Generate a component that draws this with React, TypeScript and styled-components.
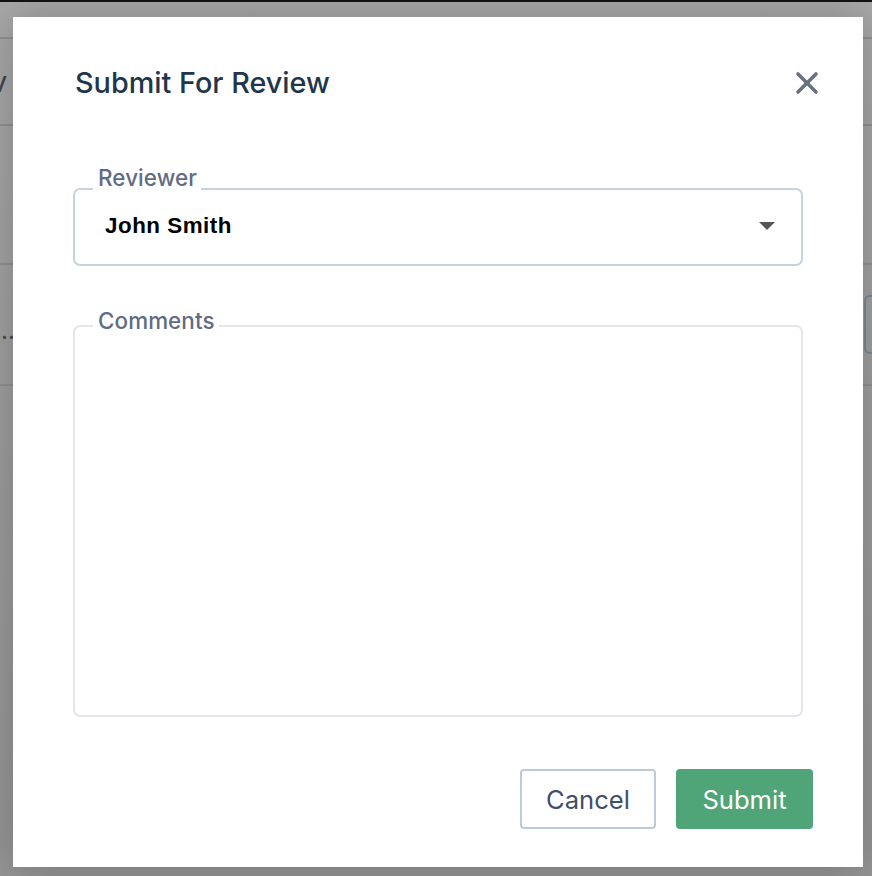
import React from "react";
import styled, { createGlobalStyle } from "styled-components";
import { X } from "lucide-react";

const Global = createGlobalStyle`
  html, body { margin: 0; padding: 0; height: 100%; overflow: hidden; background: #a3a3a3; }
  #root { height: 100%; }
  * { box-sizing: border-box; }
`;

const Page = styled.div`
  position: relative;
  width: 872px;
  height: 876px;
  overflow: hidden;
  background: linear-gradient(180deg, #a8a8a8 0%, #9c9c9c 50%, #949494 100%);
  border-top: 2px solid #111;
  font-family: Inter, "Liberation Sans", sans-serif;
`;

const BackRow = styled.div<{ $h: number }>`
  height: ${(p) => p.$h}px;
  border-bottom: 2px solid #8f8f8f;
  display: flex;
  align-items: center;
  justify-content: space-between;
  color: #4a4a4a;
  font-size: 24px;
  line-height: 1;
`;

const Clipped = styled.span`
  margin-left: -9px;
  font-size: 29px;
  color: #3d4654;
`;

const Dots = styled.span`
  margin: 12px 0 0 1px;
  font-size: 24px;
`;

const BackButton = styled.div`
  width: 30px;
  height: 59px;
  margin-right: -22px;
  border: 2px solid #7c8894;
  border-radius: 6px;
`;

const Modal = styled.div`
  position: absolute;
  left: 13px;
  top: 15px;
  width: 850px;
  height: 850px;
  background: #fff;
  box-shadow: 0 0 40px rgba(0, 0, 0, 0.22);
  padding: 45px 50px 38px 60px;
  display: flex;
  flex-direction: column;
`;

const Header = styled.div`
  display: flex;
  align-items: center;
  justify-content: space-between;
  height: 42px;
  padding-left: 2px;
`;

const Title = styled.h2`
  margin: 0;
  font-size: 28.8px;
  font-weight: 500;
  color: #1f364d;
  line-height: 42px;
`;

const Close = styled.button`
  border: 0;
  padding: 0;
  background: none;
  color: #68717d;
  width: 36px;
  height: 36px;
  display: flex;
  align-items: center;
  justify-content: center;
  margin-right: -12px;
`;

const Field = styled.fieldset<{ $tone: string; $h: number; $mt: number }>`
  margin: ${(p) => p.$mt}px 10px 0 0;
  padding: 0 20px;
  min-width: 0;
  height: ${(p) => p.$h}px;
  border: 2px solid ${(p) => p.$tone};
  border-radius: 7px;
  display: block;
`;

const Legend = styled.legend<{ $lift: number }>`
  padding: 0 4px 0 5px;
  margin-left: -2px;
  font-size: 22.4px;
  font-weight: 500;
  letter-spacing: 0.1px;
  line-height: 26px;
  color: #5f6c84;
  transform: translateY(-${(p) => p.$lift}px);
`;

const SelectRow = styled.div`
  display: flex;
  align-items: center;
  justify-content: space-between;
  height: 48px;
  padding: 0 6px 0 10px;
`;

const Value = styled.span`
  font-family: "Liberation Sans", Arial, sans-serif;
  font-size: 22.4px;
  font-weight: 700;
  letter-spacing: 0.5px;
  color: #000;
`;

const Caret = styled.span`
  width: 0;
  height: 0;
  border-left: 8px solid transparent;
  border-right: 8px solid transparent;
  border-top: 8px solid #555;
`;

const Footer = styled.div`
  display: flex;
  justify-content: flex-end;
  gap: 20px;
  margin-top: 52px;
`;

const Button = styled.button<{ $primary?: boolean }>`
  height: 60px;
  width: ${(p) => (p.$primary ? 137 : 136)}px;
  border-radius: 4px;
  font-family: Inter, "Liberation Sans", sans-serif;
  font-size: 25.6px;
  font-weight: 400;
  border: 2px solid ${(p) => (p.$primary ? "#50a578" : "#bccbd9")};
  background: ${(p) => (p.$primary ? "#50a578" : "#fff")};
  color: ${(p) => (p.$primary ? "#fff" : "#3f4f6b")};
  padding: 0;
`;

export default function App() {
  return (
    <Page>
      <Global />
      <BackRow $h={37} />
      <BackRow $h={87}>
        <Clipped>v</Clipped>
      </BackRow>
      <BackRow $h={139} />
      <BackRow $h={121}>
        <Dots>...</Dots>
        <BackButton />
      </BackRow>
      <Modal>
        <Header>
          <Title>Submit For Review</Title>
          <Close aria-label="Close">
            <X size={36} strokeWidth={2.4} />
          </Close>
        </Header>
        <Field $tone="#c6d3df" $h={90} $mt={72}>
          <Legend $lift={11}>Reviewer</Legend>
          <SelectRow>
            <Value>John Smith</Value>
            <Caret />
          </SelectRow>
        </Field>
        <Field $tone="#e2e5ea" $h={404} $mt={47}>
          <Legend $lift={5}>Comments</Legend>
        </Field>
        <Footer>
          <Button>Cancel</Button>
          <Button $primary>Submit</Button>
        </Footer>
      </Modal>
    </Page>
  );
}
